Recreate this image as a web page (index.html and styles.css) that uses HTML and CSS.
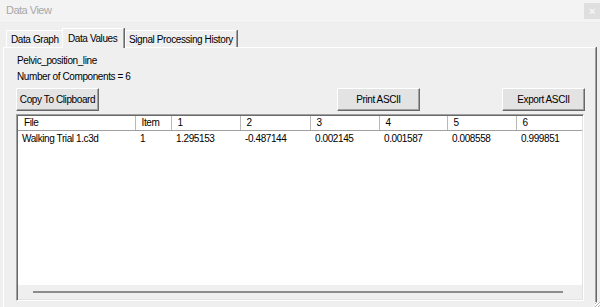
FILE: index.html
```html
<!DOCTYPE html>
<html>
<head>
<meta charset="utf-8">
<link rel="stylesheet" href="styles.css">
</head>
<body>
<div class="window">
  <div class="titlebar">
    <span class="title">Data View</span>
    <span class="close">×</span>
  </div>
  <div class="tabs">
    <div class="tab first">Data Graph</div>
    <div class="tab active">Data Values</div>
    <div class="tab last">Signal Processing History</div>
  </div>
  <div class="panel">
    <div class="label">Pelvic_position_line</div>
    <div class="label">Number of Components = 6</div>
    <div class="buttons">
      <button class="btn">Copy To Clipboard</button>
      <button class="btn print">Print ASCII</button>
      <button class="btn export">Export ASCII</button>
    </div>
    <div class="listview">
      <div class="grid-area">
        <table class="grid">
          <colgroup>
            <col class="c-file"><col class="c-item"><col class="c-1"><col class="c-2"><col class="c-3"><col class="c-4"><col class="c-5"><col class="c-6">
          </colgroup>
          <thead>
            <tr><th>File</th><th>Item</th><th>1</th><th>2</th><th>3</th><th>4</th><th>5</th><th>6</th></tr>
          </thead>
          <tbody>
            <tr><td>Walking Trial 1.c3d</td><td>1</td><td>1.295153</td><td>-0.487144</td><td>0.002145</td><td>0.001587</td><td>0.008558</td><td>0.999851</td></tr>
          </tbody>
        </table>
      </div>
      <div class="hscroll"><div class="thumb"></div></div>
    </div>
  </div>
  <div class="grip"></div>
</div>
</body>
</html>
```
FILE: styles.css
```css
* { box-sizing: border-box; }
html, body { margin: 0; padding: 0; }
body {
  width: 600px;
  height: 307px;
  overflow: hidden;
  background: #efefef;
  font-family: "Liberation Sans", Arial, sans-serif;
  font-size: 10px;
  letter-spacing: -0.4px;
  color: #000;
}
.window {
  position: relative;
  width: 600px;
  height: 307px;
  display: flex;
  flex-direction: column;
}
.titlebar {
  height: 23px;
  background: #f3f3f3;
  display: flex;
  align-items: flex-start;
  justify-content: space-between;
  border-bottom: 1px solid #ececec;
}
.title {
  color: #a8a8a8;
  font-size: 11px;
  letter-spacing: -0.5px;
  padding: 4px 0 0 6px;
}
.close {
  width: 16px;
  height: 16px;
  margin-top: 3px;
  background: #dfdfdf;
  color: #f7f7f7;
  font-size: 11px;
  font-weight: bold;
  display: flex;
  align-items: center;
  justify-content: center;
}
.tabs {
  display: flex;
  align-items: flex-end;
  height: 24px;
  padding-left: 6px;
}
.tab {
  height: 17px;
  padding: 1px 3px 0 4px;
  line-height: 15px;
  border-top: 1px solid #fff;
  border-left: 1px solid #fff;
  background: #efefef;
  white-space: nowrap;
}
.tab.first { width: 56px; }
.tab.active {
  height: 20px;
  width: 62px;
  padding-top: 2px;
  padding-left: 5px;
  border-right: 1px solid #a0a0a0;
  box-shadow: 1px 0 0 #696969;
  position: relative;
  z-index: 1;
  margin-bottom: -1px;
  background: #efefef;
}
.tab.last {
  width: 112px;
  padding-left: 3px;
  border-right: 1px solid #a0a0a0;
  box-shadow: 1px 0 0 #696969;
  margin-left: 1px;
}
.panel {
  margin-left: 3px;
  width: 593px;
  height: 262px;
  border-top: 1px solid #fff;
  border-left: 1px solid #fff;
  border-right: 1px solid #a0a0a0;
  box-shadow: 1px 0 0 #696969;
  padding: 5px 10px 0 13px;
  display: flex;
  flex-direction: column;
}
.panel .buttons, .panel .listview { margin-left: -1px; }
.label {
  height: 16px;
  line-height: 16px;
}
.buttons {
  display: flex;
  margin-top: 3px;
  height: 23px;
}
.btn {
  font: inherit;
  letter-spacing: inherit;
  height: 23px;
  width: 83px;
  padding: 0;
  background: #e3e3e3;
  border: 1px solid;
  border-color: #fff #696969 #696969 #fff;
  box-shadow: inset -1px -1px 0 #a0a0a0, inset 1px 1px 0 #e3e3e3;
  color: #000;
}
.btn.print { margin-left: 238px; }
.btn.export { margin-left: 82px; }
.listview {
  margin-top: 3px;
  width: 568px;
  height: 187px;
  border: 1px solid;
  border-color: #a0a0a0 #fff #fff #a0a0a0;
  box-shadow: inset 1px 1px 0 #696969, inset -1px -1px 0 #e3e3e3;
  background: #fff;
  padding: 1px;
  display: flex;
  flex-direction: column;
}
.grid-area {
  flex: 1;
  background: #fff;
  overflow: hidden;
}
.grid {
  border-collapse: collapse;
  table-layout: fixed;
  width: 564px;
}
.c-file { width: 117px; }
.c-item { width: 36px; }
.c-1 { width: 69px; }
.c-2 { width: 70px; }
.c-3 { width: 69px; }
.c-4 { width: 68px; }
.c-5 { width: 69px; }
.c-6 { width: 66px; }
.grid th {
  font-weight: normal;
  text-align: left;
  height: 15px;
  padding: 0 0 0 6px;
  line-height: 14px;
  border-right: 1px solid #b8b8b8;
  border-bottom: 1px solid #a0a0a0;
  background: #fff;
  white-space: nowrap;
}
.grid td {
  height: 16px;
  padding: 1px 0 0 5px;
  line-height: 14px;
  white-space: nowrap;
}
.grid td:first-child { padding-left: 4px; }
.hscroll {
  height: 14px;
  background: #efefef;
  display: flex;
  align-items: center;
  padding-left: 15px;
}
.thumb {
  width: 530px;
  height: 2px;
  background: #8c8c8c;
}
.grip {
  position: absolute;
  right: 0;
  bottom: 0;
  width: 5px;
  height: 5px;
  background: repeating-linear-gradient(135deg, #fff 0 1px, #b0b0b0 1px 2px);
}
```
